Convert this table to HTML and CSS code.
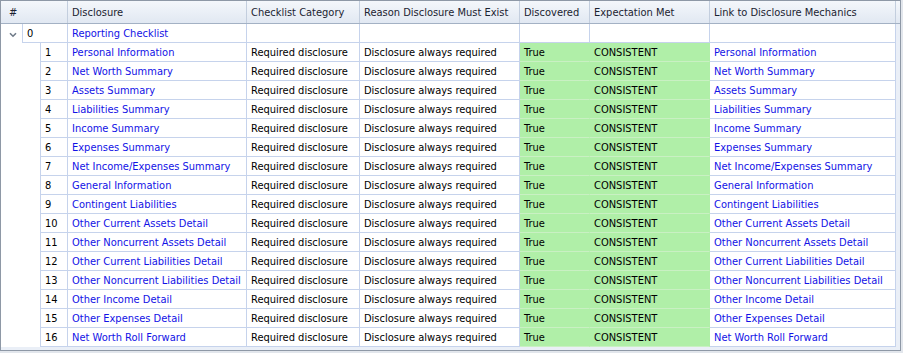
FILE: index.html
```html
<!DOCTYPE html>
<html>
<head>
<meta charset="utf-8">
<link rel="stylesheet" href="styles.css">
</head>
<body>
<div class="frame">
  <div class="grid">
    <div class="row head">
      <div class="hc hash">#</div>
      <div class="hc">Disclosure</div>
      <div class="hc">Checklist Category</div>
      <div class="hc">Reason Disclosure Must Exist</div>
      <div class="hc">Discovered</div>
      <div class="hc">Expectation Met</div>
      <div class="hc">Link to Disclosure Mechanics</div>
      <div class="hc end"></div>
    </div>
    <div class="row">
      <div class="c exp"><svg width="8" height="6" viewBox="0 0 8 6"><path d="M1 1.2 L4 4.2 L7 1.2" fill="none" stroke="#6f7a88" stroke-width="1.6"/></svg></div>
      <div class="c span2 num lb">0</div>
      <div class="c link">Reporting Checklist</div>
      <div class="c"></div>
      <div class="c"></div>
      <div class="c"></div>
      <div class="c"></div>
      <div class="c"></div>
    </div>
    <div class="row"><div class="c indent span2"></div><div class="c num lb">1</div><div class="c link">Personal Information</div><div class="c">Required disclosure</div><div class="c">Disclosure always required</div><div class="c green">True</div><div class="c green">CONSISTENT</div><div class="c link">Personal Information</div></div>
    <div class="row"><div class="c indent span2"></div><div class="c num lb">2</div><div class="c link">Net Worth Summary</div><div class="c">Required disclosure</div><div class="c">Disclosure always required</div><div class="c green">True</div><div class="c green">CONSISTENT</div><div class="c link">Net Worth Summary</div></div>
    <div class="row"><div class="c indent span2"></div><div class="c num lb">3</div><div class="c link">Assets Summary</div><div class="c">Required disclosure</div><div class="c">Disclosure always required</div><div class="c green">True</div><div class="c green">CONSISTENT</div><div class="c link">Assets Summary</div></div>
    <div class="row"><div class="c indent span2"></div><div class="c num lb">4</div><div class="c link">Liabilities Summary</div><div class="c">Required disclosure</div><div class="c">Disclosure always required</div><div class="c green">True</div><div class="c green">CONSISTENT</div><div class="c link">Liabilities Summary</div></div>
    <div class="row"><div class="c indent span2"></div><div class="c num lb">5</div><div class="c link">Income Summary</div><div class="c">Required disclosure</div><div class="c">Disclosure always required</div><div class="c green">True</div><div class="c green">CONSISTENT</div><div class="c link">Income Summary</div></div>
    <div class="row"><div class="c indent span2"></div><div class="c num lb">6</div><div class="c link">Expenses Summary</div><div class="c">Required disclosure</div><div class="c">Disclosure always required</div><div class="c green">True</div><div class="c green">CONSISTENT</div><div class="c link">Expenses Summary</div></div>
    <div class="row"><div class="c indent span2"></div><div class="c num lb">7</div><div class="c link">Net Income/Expenses Summary</div><div class="c">Required disclosure</div><div class="c">Disclosure always required</div><div class="c green">True</div><div class="c green">CONSISTENT</div><div class="c link">Net Income/Expenses Summary</div></div>
    <div class="row"><div class="c indent span2"></div><div class="c num lb">8</div><div class="c link">General Information</div><div class="c">Required disclosure</div><div class="c">Disclosure always required</div><div class="c green">True</div><div class="c green">CONSISTENT</div><div class="c link">General Information</div></div>
    <div class="row"><div class="c indent span2"></div><div class="c num lb">9</div><div class="c link">Contingent Liabilities</div><div class="c">Required disclosure</div><div class="c">Disclosure always required</div><div class="c green">True</div><div class="c green">CONSISTENT</div><div class="c link">Contingent Liabilities</div></div>
    <div class="row"><div class="c indent span2"></div><div class="c num lb">10</div><div class="c link">Other Current Assets Detail</div><div class="c">Required disclosure</div><div class="c">Disclosure always required</div><div class="c green">True</div><div class="c green">CONSISTENT</div><div class="c link">Other Current Assets Detail</div></div>
    <div class="row"><div class="c indent span2"></div><div class="c num lb">11</div><div class="c link">Other Noncurrent Assets Detail</div><div class="c">Required disclosure</div><div class="c">Disclosure always required</div><div class="c green">True</div><div class="c green">CONSISTENT</div><div class="c link">Other Noncurrent Assets Detail</div></div>
    <div class="row"><div class="c indent span2"></div><div class="c num lb">12</div><div class="c link">Other Current Liabilities Detail</div><div class="c">Required disclosure</div><div class="c">Disclosure always required</div><div class="c green">True</div><div class="c green">CONSISTENT</div><div class="c link">Other Current Liabilities Detail</div></div>
    <div class="row"><div class="c indent span2"></div><div class="c num lb">13</div><div class="c link">Other Noncurrent Liabilities Detail</div><div class="c">Required disclosure</div><div class="c">Disclosure always required</div><div class="c green">True</div><div class="c green">CONSISTENT</div><div class="c link">Other Noncurrent Liabilities Detail</div></div>
    <div class="row"><div class="c indent span2"></div><div class="c num lb">14</div><div class="c link">Other Income Detail</div><div class="c">Required disclosure</div><div class="c">Disclosure always required</div><div class="c green">True</div><div class="c green">CONSISTENT</div><div class="c link">Other Income Detail</div></div>
    <div class="row"><div class="c indent span2"></div><div class="c num lb">15</div><div class="c link">Other Expenses Detail</div><div class="c">Required disclosure</div><div class="c">Disclosure always required</div><div class="c green">True</div><div class="c green">CONSISTENT</div><div class="c link">Other Expenses Detail</div></div>
    <div class="row"><div class="c indent span2"></div><div class="c num lb">16</div><div class="c link">Net Worth Roll Forward</div><div class="c">Required disclosure</div><div class="c">Disclosure always required</div><div class="c green">True</div><div class="c green">CONSISTENT</div><div class="c link">Net Worth Roll Forward</div></div>
  </div>
</div>
</body>
</html>
```

FILE: styles.css
```css
html, body {
  margin: 0;
  padding: 0;
}
body {
  width: 903px;
  height: 353px;
  background: #e2e6ec;
  font-family: "DejaVu Sans Condensed", "DejaVu Sans", sans-serif;
  font-stretch: condensed;
  font-size: 11px;
  color: #000;
  overflow: hidden;
}
.frame {
  width: 901px;
  height: 351px;
  box-sizing: border-box;
  border: 1px solid #8e98a6;
  background: #eaeff7;
}
.grid {
  display: flex;
  flex-direction: column;
}
.row {
  display: grid;
  grid-template-columns: 21px 18px 28px 179px 113px 160px 70px 120px 186px;
  height: 19px;
}
.row.head {
  grid-template-columns: 67px 179px 113px 160px 70px 120px 186px 1fr;
  background: linear-gradient(#f4f7fb, #e1e8f2);
  border-bottom: 1px solid #a3b1c4;
  box-sizing: border-box;
  height: 23px;
}
.hc {
  box-sizing: border-box;
  border-right: 1px solid #c3cede;
  padding: 2px 4px 0;
  line-height: 20px;
  color: #1b2330;
  white-space: nowrap;
  overflow: hidden;
}
.hc.hash { padding-left: 8px; }
.hc.end { border-right: none; }
.c {
  box-sizing: border-box;
  background: #fff;
  border-right: 1px solid #c6d3ec;
  border-bottom: 1px solid #c6d3ec;
  padding: 1px 4px 0;
  line-height: 17px;
  white-space: nowrap;
  overflow: hidden;
}
.span2 { grid-column: span 2; }
.lb { border-left: 1px solid #c6d3ec; }
.c.exp {
  border-right: none;
  border-bottom: none;
  padding: 2px 0 0 8px;
  display: flex;
  align-items: center;
}
.c.indent {
  border-right: none;
  border-bottom: none;
}
.c.num { padding-left: 4px; }
.c.link { color: #1212e6; }
.c.green {
  background: #b0efa8;
  border-right-color: #b0efa8;
  border-bottom-color: #c9f0c3;
}
```
